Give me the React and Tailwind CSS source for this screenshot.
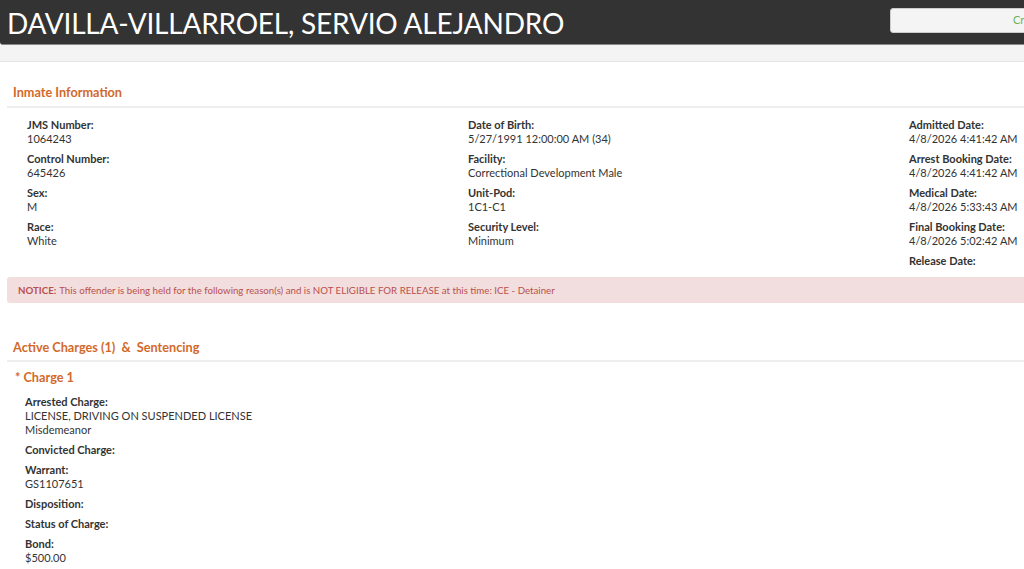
import React from 'react';

const lato = { fontFamily: 'Lato, "Noto Sans", sans-serif' };

function Field({ label, values = [] }) {
  return (
    <div className="text-[11px] leading-[14px] text-[#333]">
      <div className="font-bold">{label}</div>
      {values.map((v) => (
        <div key={v}>{v}</div>
      ))}
    </div>
  );
}

const col1 = [
  ['JMS Number:', ['1064243']],
  ['Control Number:', ['645426']],
  ['Sex:', ['M']],
  ['Race:', ['White']],
];
const col2 = [
  ['Date of Birth:', ['5/27/1991 12:00:00 AM (34)']],
  ['Facility:', ['Correctional Development Male']],
  ['Unit-Pod:', ['1C1-C1']],
  ['Security Level:', ['Minimum']],
];
const col3 = [
  ['Admitted Date:', ['4/8/2026 4:41:42 AM']],
  ['Arrest Booking Date:', ['4/8/2026 4:41:42 AM']],
  ['Medical Date:', ['4/8/2026 5:33:43 AM']],
  ['Final Booking Date:', ['4/8/2026 5:02:42 AM']],
  ['Release Date:', []],
];
const charge = [
  ['Arrested Charge:', ['LICENSE, DRIVING ON SUSPENDED LICENSE', 'Misdemeanor']],
  ['Convicted Charge:', []],
  ['Warrant:', ['GS1107651']],
  ['Disposition:', []],
  ['Status of Charge:', []],
  ['Bond:', ['$500.00']],
];

function Column({ items }) {
  return (
    <div className="flex flex-col gap-[6px]">
      {items.map(([l, v]) => (
        <Field key={l} label={l} values={v} />
      ))}
    </div>
  );
}

export default function App() {
  return (
    <div className="w-[1024px] h-[569px] overflow-hidden bg-white" style={lato}>
      <div className="w-[1080px]">
        {/* Header */}
        <div className="h-[45px] bg-[#333] rounded-bl-[3px] border-b border-[#888] flex items-center justify-between pl-[7px]">
          <h1 className="text-white text-[28px] leading-none font-normal tracking-[-0.2px] mt-[1px]">
            DAVILLA-VILLARROEL, SERVIO ALEJANDRO
          </h1>
          <div className="w-[190px] h-[25px] mb-[4px] rounded-[3px] bg-[#f4f4f4] border border-[#ccc] flex items-center pl-[122px] text-[11px] text-[#6cb35c]">
            Cr
          </div>
        </div>
        <div className="h-[17px] bg-[#f4f4f4] border-b border-[#e6e6e6]" />

        <div className="pl-[7px]">
          {/* Inmate information */}
          <div className="mt-[21px] border-b-2 border-[#eee] pb-[5px] pl-[6px] text-[12.7px] leading-[18px] font-bold text-[#d2692a]">
            Inmate Information
          </div>
          <div className="grid grid-cols-[441px_441px_441px] pl-[20px] mt-[10px]">
            <Column items={col1} />
            <Column items={col2} />
            <Column items={col3} />
          </div>

          {/* Notice */}
          <div className="mt-[9px] h-[26px] rounded-[3px] bg-[#f2dede] flex items-center pl-[11px] pt-[1px] text-[9.7px] text-[#b9504c]">
            <span className="font-bold mr-[3px]">NOTICE:</span>
            This offender is being held for the following reason(s) and is NOT ELIGIBLE FOR RELEASE at this time: ICE - Detainer
          </div>

          {/* Charges */}
          <div className="mt-[35px] border-b-2 border-[#eee] pb-[4px] pl-[6px] text-[12.7px] leading-[18px] font-bold text-[#d2692a] whitespace-pre">
            {'Active Charges (1)  &  Sentencing'}
          </div>
          <div className="mt-[6px] pl-[8px] text-[12.7px] leading-[18px] font-bold text-[#d2692a]">
            * Charge 1
          </div>
          <div className="mt-[9px] pl-[18px]">
            <Column items={charge} />
          </div>
        </div>
      </div>
    </div>
  );
}
